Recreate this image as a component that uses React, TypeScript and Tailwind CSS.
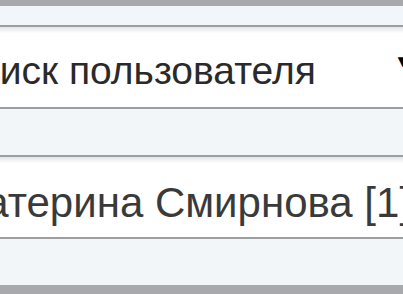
export default function App() {
  return (
    <div className="w-[403px] h-[294px] overflow-hidden bg-white font-['Liberation_Sans',Arial,sans-serif]">
      {/* top edge */}
      <div className="h-[6px] bg-[#a7a9ac]" />
      <div className="h-[19px] bg-[#f2f6fb]" />

      {/* search row */}
      <div className="border-t-[2px] border-[#9c9ea1]">
        <div className="h-[80px] bg-gradient-to-b from-[#e3e5e8] via-white via-[8%] to-white flex items-center justify-between">
          <span className="ml-[-50px] whitespace-nowrap text-[39px] leading-none text-[#2a2a2a] pt-[6px]">Поиск пользователя</span>
          <span className="mr-[-8px] text-[17px] leading-none text-black pb-[12px]">▼</span>
        </div>
      </div>
      <div className="h-[48px] border-t-[2px] border-[#9c9ea1] bg-[#f3f6f9]" />

      {/* user row */}
      <div className="border-t-[2px] border-[#9c9ea1]">
        <div className="h-[80px] bg-gradient-to-b from-[#e3e5e8] via-white via-[8%] to-white flex items-center">
          <span className="ml-[-62px] whitespace-nowrap text-[42px] leading-none text-[#3a3a3a] pt-[12px]">Екатерина Смирнова [1]</span>
        </div>
      </div>
      <div className="h-[48px] border-t-[2px] border-[#9c9ea1] bg-[#f3f6f9]" />
      <div className="h-[9px] bg-[#a7a9ac]" />
    </div>
  );
}
